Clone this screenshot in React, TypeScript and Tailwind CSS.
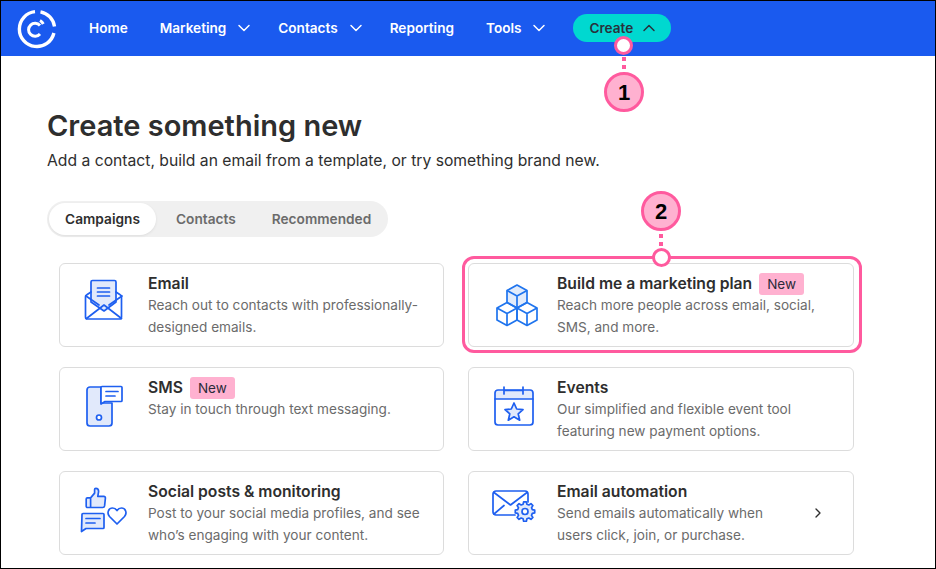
import { ChevronDown, ChevronUp, ChevronRight } from "lucide-react";
import type { ReactNode } from "react";

const blue = "#1e5ff0";

function EmailIcon() {
  return (
    <svg className="mr-[4px] mb-[10px]" width="40" height="42" viewBox="0 0 40 42" fill="none" stroke={blue} strokeWidth="1.7" strokeLinejoin="round" strokeLinecap="round">
      <path d="M7 3a1.500 1.500 0 0 1 1.500-1.500h22A1.500 1.500 0 0 1 32 3v20l-12 9-13-9z" fill="#e1e9fb" />
      <path d="M13.500 9h12M13.500 13h12M13.500 17h12" />
      <path d="M7 13l-4.500 3a2 2 0 0 0-1 1.800V38a2 2 0 0 0 2 2h32a2 2 0 0 0 2-2V17.800a2 2 0 0 0-1-1.800L32 13" />
      <path d="M2 17l13 9M38 17l-13 9M2.500 39.500L20 26l17.500 13.500" />
    </svg>
  );
}

function CubesIcon() {
  return (
    <svg className="ml-[3px]" width="44" height="44" viewBox="0 0 44 44" fill="none" stroke="#1f74ee" strokeWidth="1.7" strokeLinejoin="round">
      <path d="M22 2l10 5.500v12L22 25l-10-5.500v-12z" fill="#e1ebfb" />
      <path d="M12 7.500L22 13l10-5.500M22 13v12" />
      <path d="M12 19.500l10 5.500v12l-10 5.500L2 37V25z" />
      <path d="M2 25l10 5.500L22 25M12 30.500v12" />
      <path d="M32 19.500l10 5.500v12l-10 5.500L22 37V25z" />
      <path d="M22 25l10 5.500L42 25M32 30.500v12" />
    </svg>
  );
}

function SmsIcon() {
  return (
    <svg className="mr-[2px] mb-[6px]" width="38" height="42" viewBox="0 0 38 42" fill="none" stroke={blue} strokeWidth="1.7" strokeLinejoin="round" strokeLinecap="round">
      <path d="M15 2H4a3 3 0 0 0-3 3v33a3 3 0 0 0 3 3h19a3 3 0 0 0 3-3V18H15z" fill="#e1e9fb" />
      <circle cx="13" cy="32.500" r="2.500" fill="#fff" />
      <path d="M15 2.500a1 1 0 0 1 1-1h19a1 1 0 0 1 1 1v13a1 1 0 0 1-1 1H19l-4 2.500z" fill="#fff" />
      <path d="M20 6.500h12M20 11h9" />
    </svg>
  );
}

function EventsIcon() {
  return (
    <svg className="mr-[3px] mb-[6px]" width="40" height="40" viewBox="0 0 40 40" fill="none" stroke={blue} strokeWidth="1.7" strokeLinejoin="round" strokeLinecap="round">
      <path d="M1 13V7a3 3 0 0 1 3-3h32a3 3 0 0 1 3 3v6z" fill="#e1e9fb" />
      <path d="M1 13v23a3 3 0 0 0 3 3h32a3 3 0 0 0 3-3V13" />
      <path d="M10 1v7M29 1v7M10 4.500h19" />
      <path d="M20 17l2.700 6 6.300.6-4.800 4.200 1.500 6.400-5.700-3.400-5.700 3.400 1.500-6.400-4.800-4.200 6.300-.6z" fill="#e1e9fb" />
    </svg>
  );
}

function SocialIcon() {
  return (
    <svg className="mr-[5px] mb-[6px]" width="48" height="46" viewBox="0 0 48 46" fill="none" stroke={blue} strokeWidth="1.7" strokeLinejoin="round" strokeLinecap="round">
      <g transform="translate(5 .5) scale(.8)" strokeWidth="2.100">
        <path d="M7 13h-4a1.500 1.500 0 0 0-1.500 1.500v9A1.500 1.500 0 0 0 3 25h4zM7 13l5-6V2.500c0-1 .5-1.500 1.500-1.500 2.500 0 3.500 2 3.500 4l-1 6h7.500a2 2 0 0 1 2 2.300L24.500 23a2.400 2.400 0 0 1-2.400 2H7" fill="#e1e9fb" />
      </g>
      <path d="M2 27.500a1 1 0 0 1 1-1h20a1 1 0 0 1 1 1v13a1 1 0 0 1-1 1H6L1.500 44.500z" fill="#e1e9fb" />
      <path d="M6 31.500h14M6 36h9" />
      <path d="M37 37l-7.500-7.500c-3-3.500-1-8.500 3-8.500 2 0 3.500 1 4.500 2.500 1-1.500 2.500-2.500 4.500-2.500 4 0 6 5 3 8.500z" />
    </svg>
  );
}

function AutomationIcon() {
  return (
    <svg className="mr-[2px] mb-[12px]" width="44" height="34" viewBox="0 0 44 34" fill="none" stroke={blue} strokeWidth="1.7" strokeLinejoin="round" strokeLinecap="round">
      <path d="M23 25H4a3 3 0 0 1-3-3V4a3 3 0 0 1 3-3h29a3 3 0 0 1 3 3v8" />
      <path d="M2 2.500L18.500 15 35 2.500M2 24l10-8.500" />
      <path d="M32 14h3.500l.6 3 2.500 1 2.600-1.700 2.400 2.500-1.700 2.600 1 2.400 3 .6v3.500l-3 .6-1 2.500 1.700 2.600-2.400 2.400-2.600-1.700-2.500 1-.6 3H32l-.6-3-2.500-1-2.600 1.700-2.400-2.400 1.700-2.600-1-2.500-3-.6v-3.500l3-.6 1-2.400-1.700-2.600 2.400-2.500 2.600 1.700 2.500-1z" transform="translate(6 .6) scale(.8)" fill="#e1e9fb" strokeWidth="2.100" />
      <circle cx="33" cy="21.500" r="3" fill="#fff" />
    </svg>
  );
}

function Logo() {
  return (
    <svg width="42" height="42" viewBox="0 0 42 42" fill="none" stroke="#fff" strokeWidth="3.400">
      <path d="M19 3.600A17.500 17.500 0 1 0 37.900 25" />
      <path d="M24.500 3.800A17.500 17.500 0 0 1 38.500 18.500" />
      <path d="M24 17.500A6.500 6.500 0 1 0 24 26" strokeWidth="3" />
      <path d="M24 12.500A8 8 0 0 1 27.300 16" strokeWidth="3" />
    </svg>
  );
}

function NewBadge() {
  return <span className="ml-[7px] flex h-[22px] items-center rounded-[3px] bg-[#ffb1d0] px-[8px] text-[13.500px] font-normal text-[#2b2b3a]">New</span>;
}

function Card({ icon, title, badge, text, arrow }: { icon: ReactNode; title: string; badge?: boolean; text: string; arrow?: boolean }) {
  return (
    <div className="flex h-[84px] items-start rounded-[6px] border border-[#dcdcdc] bg-white">
      <div className="flex h-full w-[88px] shrink-0 items-center justify-center pl-1">{icon}</div>
      <div className="min-w-0 flex-1 pt-[9px]">
        <div className="flex h-[22px] items-center text-[15.700px] font-semibold text-[#2e2e2e]">
          {title}
          {badge && <NewBadge />}
        </div>
        <p className={`mt-[-1px] text-[13.600px] leading-[22px] text-[#6b6b6b] ${arrow ? "w-[225px]" : "w-[280px]"}`}>{text}</p>
      </div>
      {arrow && <ChevronRight className="mt-[33px] mr-[27px] text-[#2e2e2e]" size={16} strokeWidth={2} />}
    </div>
  );
}

function NavItem({ label, chevron }: { label: string; chevron?: boolean }) {
  return (
    <div className="flex items-center text-[13.600px] font-semibold text-white">
      {label}
      {chevron && <ChevronDown className="mr-[-8px] ml-[8px]" size={20} strokeWidth={1.8} />}
    </div>
  );
}

function Marker({ n }: { n: number }) {
  return (
    <div className="flex h-[40px] w-[40px] items-center justify-center rounded-full border-[3px] border-[#ff5a9e] bg-[#ffb1d0] text-[22px] font-bold text-black" style={{ fontFamily: "'Liberation Sans', sans-serif" }}>
      {n}
    </div>
  );
}

function Dots() {
  return (
    <div className="flex flex-col gap-[4px]">
      <div className="h-[4px] w-[4px] bg-[#ff5a9e]" />
      <div className="h-[4px] w-[4px] bg-[#ff5a9e]" />
    </div>
  );
}

export default function App() {
  return (
    <div className="relative h-[569px] w-[936px] overflow-hidden border border-black bg-white" style={{ fontFamily: "Inter, sans-serif" }}>
      <header className="flex h-[55px] items-center bg-[#1a5aef] pl-[15px]">
        <Logo />
        <nav className="ml-[31px] flex items-center gap-[32px]">
          <NavItem label="Home" />
          <NavItem label="Marketing" chevron />
          <NavItem label="Contacts" chevron />
          <NavItem label="Reporting" />
          <NavItem label="Tools" chevron />
        </nav>
        <div className="mb-[1px] ml-[32px] flex h-[28px] w-[98px] items-center rounded-full bg-[#00d8d0] pl-[16px] text-[13.600px] font-semibold text-[#28323c]">
          Create
          <ChevronUp className="ml-[6px]" size={20} strokeWidth={1.8} />
        </div>
      </header>

      <main className="pl-[46px]">
        <h1 className="mt-[52px] text-[29px] leading-[36px] font-semibold text-[#2e2e2e]">Create something new</h1>
        <p className="mt-[6px] text-[15.700px] leading-[22px] text-[#2e2e2e]">Add a contact, build an email from a template, or try something brand new.</p>

        <div className="mt-[29px] flex h-[36px] w-[341px] items-center rounded-full bg-[#f0f0f0] p-[2px] text-[13.700px] font-semibold text-[#6b6b6b]">
          <div className="flex h-[32px] w-[107px] items-center justify-center rounded-full bg-white text-[#2e2e2e] shadow-[0_1px_3px_rgba(0,0,0,0.08)]">Campaigns</div>
          <div className="ml-[20px]">Contacts</div>
          <div className="ml-[36px]">Recommended</div>
        </div>

        <div className="mt-[26px] ml-[12px] grid w-[795px] grid-cols-[385px_386px] gap-x-[24px] gap-y-[20px]">
          <Card icon={<EmailIcon />} title="Email" text="Reach out to contacts with professionally-designed emails." />
          <Card icon={<CubesIcon />} title="Build me a marketing plan" badge text="Reach more people across email, social, SMS, and more." />
          <Card icon={<SmsIcon />} title="SMS" badge text="Stay in touch through text messaging." />
          <Card icon={<EventsIcon />} title="Events" text="Our simplified and flexible event tool featuring new payment options." />
          <Card icon={<SocialIcon />} title="Social posts & monitoring" text="Post to your social media profiles, and see who’s engaging with your content." />
          <Card icon={<AutomationIcon />} title="Email automation" text="Send emails automatically when users click, join, or purchase." arrow />
        </div>
      </main>

      {/* callouts */}
      <div className="absolute top-[35px] left-[613px] h-[19px] w-[19px] rounded-full border-[3px] border-[#ff5a9e] bg-white" />
      <div className="absolute top-[56px] left-[621px]"><Dots /></div>
      <div className="absolute top-[71px] left-[603px]"><Marker n={1} /></div>

      <div className="absolute top-[190px] left-[640px]"><Marker n={2} /></div>
      <div className="absolute top-[255px] left-[461px] h-[97px] w-[400px] rounded-[12px] border-[3px] border-[#ff5a9e]" />
      <div className="absolute top-[233px] left-[658px]"><Dots /></div>
      <div className="absolute top-[247px] left-[651px] h-[19px] w-[19px] rounded-full border-[3px] border-[#ff5a9e] bg-white" />
    </div>
  );
}
